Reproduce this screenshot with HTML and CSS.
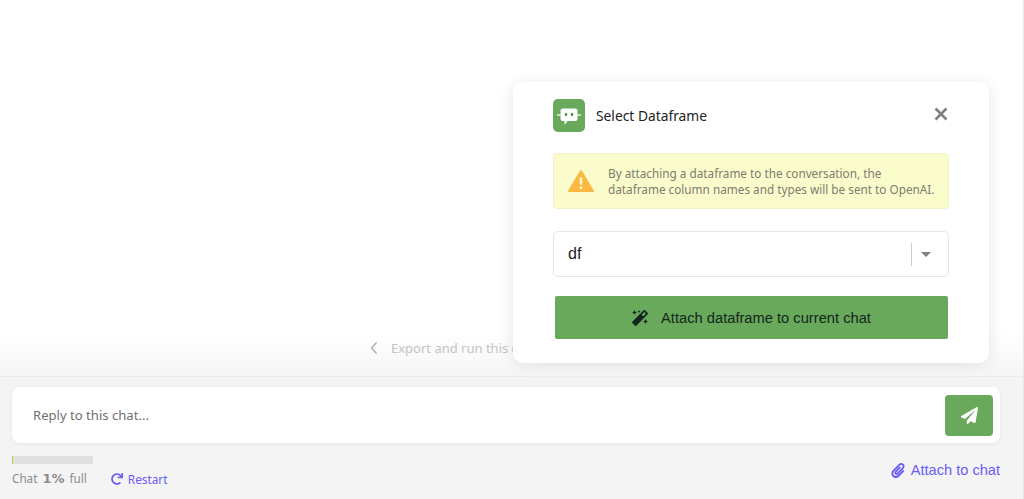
FILE: index.html
```html
<!DOCTYPE html>
<html lang="en">
<head>
<meta charset="utf-8">
<title>Select Dataframe</title>
<link rel="stylesheet" href="styles.css">
</head>
<body>
<div class="app">
  <main class="chat">
    <div class="export"><svg class="chev" viewBox="0 0 10 14" width="10" height="14"><path d="M7.500 1.500 2.500 7l5 5.500" fill="none" stroke="currentColor" stroke-width="1.500"/></svg><span>Export and run this code</span></div>
  </main>
  <footer class="footer">
    <div class="reply">
      <span class="placeholder">Reply to this chat...</span>
      <button class="send"><svg viewBox="0 0 512 512" width="17" height="17"><path fill="#fff" d="M476 3.200L12.500 270.600c-18.100 10.400-15.800 35.600 2.200 43.200L121 358.400l287.300-253.200c5.500-4.900 13.300 2.600 8.600 8.300L176 407v80.500c0 23.600 28.500 32.900 42.500 15.800L282 426l124.600 52.200c14.200 6 30.400-2.900 33-18.200l72-432C515 7.800 493.300-6.800 476 3.200z"/></svg></button>
    </div>
    <div class="meta">
      <div class="usage">
        <div class="track"><div class="fill"></div></div>
        <div class="usage-row">
          <span class="usage-text">Chat <b>1%</b> full</span>
          <a class="link restart"><svg viewBox="0 0 512 512" width="12" height="12"><path fill="currentColor" d="M500.330 0h-47.410a12 12 0 0 0-12 12.570l4 82.760A247.420 247.420 0 0 0 256 8C119.340 8 7.900 119.530 8 256.190 8.100 393.070 119.100 504 256 504a247.100 247.100 0 0 0 166.180-63.910 12 12 0 0 0 .48-17.430l-34-34a12 12 0 0 0-16.380-.55A176 176 0 1 1 402.100 157.800l-101.530-4.870a12 12 0 0 0-12.570 12v47.410a12 12 0 0 0 12 12h200.330a12 12 0 0 0 12-12V12a12 12 0 0 0-12-12z"/></svg>Restart</a>
        </div>
      </div>
      <a class="link attach"><svg viewBox="0 0 448 512" width="14" height="15"><path fill="currentColor" d="M43.246 466.142c-58.430-60.289-57.341-157.511 1.386-217.581L254.392 34c44.316-45.332 116.351-45.336 160.671 0 43.890 44.894 43.943 117.329 0 162.276L232.214 383.128c-29.855 30.537-78.633 30.111-107.982-.998-28.275-29.970-27.368-77.473 1.452-106.953l143.743-146.835c6.182-6.314 16.312-6.422 22.626-.241l22.861 22.379c6.315 6.182 6.422 16.312.241 22.626L171.427 319.927c-4.932 5.045-5.236 13.428-.648 18.292 4.372 4.634 11.245 4.711 15.688.165l182.849-186.851c19.613-20.062 19.613-52.725-.011-72.798-19.189-19.627-49.957-19.637-69.154 0L90.390 293.295c-34.763 35.560-35.299 93.120-1.191 128.313 34.010 35.093 88.985 35.137 123.058.286l172.060-175.999c6.177-6.319 16.307-6.433 22.626-.256l22.877 22.364c6.319 6.177 6.434 16.307.256 22.626l-172.060 175.998c-59.576 60.938-155.943 60.216-214.770-.485z"/></svg>Attach to chat</a>
    </div>
  </footer>
</div>
<section class="modal">
  <header class="modal-head">
    <span class="logo"><svg viewBox="0 0 32 33" width="32" height="33"><path fill="#fff" d="M10 9.500h12a2.500 2.500 0 0 1 2.500 2.500v7.500a2.500 2.500 0 0 1-2.500 2.500h-7.500L11.500 26v-4H10a2.500 2.500 0 0 1-2.500-2.500V12A2.500 2.500 0 0 1 10 9.500z"/><rect x="4" y="15.400" width="3.500" height="1.300" fill="#fff"/><rect x="24.500" y="15.400" width="3.500" height="1.300" fill="#fff"/><rect x="11.800" y="14" width="2.400" height="3" rx="1" fill="#4d8a42"/><rect x="17.800" y="14" width="2.400" height="3" rx="1" fill="#4d8a42"/></svg></span>
    <h2 class="title">Select Dataframe</h2>
    <button class="close"><svg viewBox="0 0 14 14" width="14" height="14"><path d="M1.500 1.500l11 11m0-11-11 11" stroke="#808080" stroke-width="2.600" fill="none"/></svg></button>
  </header>
  <div class="warning">
    <svg class="warn-icon" viewBox="0 0 26 24" width="26" height="24"><path fill="#fbb941" stroke="#fbb941" stroke-width="2" stroke-linejoin="round" d="M13 2 25 22H1z"/><rect x="11.700" y="8" width="2.600" height="8" rx="1.200" fill="#fdf6c8"/><circle cx="13" cy="18.800" r="1.500" fill="#fdf6c8"/></svg>
    <p>By attaching a dataframe to the conversation, the<br>dataframe column names and types will be sent to OpenAI.</p>
  </div>
  <div class="select">
    <span class="value">df</span>
    <span class="divider"></span>
    <span class="caret"></span>
  </div>
  <button class="attach-btn"><svg viewBox="0 0 512 512" width="16" height="16"><path fill="#14261c" d="M224 96l16-32 32-16-32-16-16-32-16 32-32 16 32 16 16 32zM80 160l26.660-53.330L160 80l-53.340-26.670L80 0 53.340 53.330 0 80l53.340 26.670L80 160zm352 128l-26.660 53.330L352 368l53.340 26.670L432 448l26.660-53.330L512 368l-53.340-26.670L432 288zm70.620-193.770L417.770 9.380C411.530 3.120 403.340 0 395.150 0c-8.190 0-16.380 3.120-22.630 9.380L9.380 372.520c-12.500 12.500-12.500 32.760 0 45.250l84.850 84.850c6.250 6.250 14.440 9.370 22.620 9.370 8.190 0 16.380-3.120 22.630-9.370l363.140-363.150c12.500-12.480 12.500-32.750 0-45.240zM359.450 203.460l-50.910-50.910 86.600-86.600 50.910 50.910-86.600 86.600z"/></svg><span>Attach dataframe to current chat</span></button>
</section>
</body>
</html>
```

FILE: styles.css
```css
* { box-sizing: border-box; }
html, body { margin: 0; height: 100%; }
body { width: 1024px; height: 499px; overflow: hidden; position: relative; font-family: "Noto Sans", "Open Sans", sans-serif; background: #fff; border-right: 1px solid #e8e8e8; }
.app { display: flex; flex-direction: column; height: 499px; }
.chat { height: 377px; display: flex; align-items: flex-end; padding: 0 0 18px 369px; background: linear-gradient(#fff 88%, #f6f6f6 100%); border-bottom: 1px solid #ebebeb; }
.export { display: flex; align-items: center; gap: 12px; font-size: 13px; color: #c4c4c4; white-space: nowrap; line-height: 20px; }
.chev { color: #b0b0b0; }
.footer { flex: 1; background: #f4f4f4; padding: 10px 23px 0 12px; }
.reply { height: 56px; background: #fff; border-radius: 8px; box-shadow: 0 1px 4px rgba(0,0,0,.06); display: flex; align-items: center; justify-content: space-between; padding: 0 7px 0 21px; }
.placeholder { font-size: 13.100px; color: #707070; }
.send { width: 48px; height: 41px; border: 0; border-radius: 4px; background: #68a95b; display: flex; align-items: center; justify-content: center; padding: 0; }
.meta { display: flex; justify-content: space-between; align-items: flex-start; margin-top: 13px; }
.track { width: 81px; height: 8px; background: #e0e0e0; }
.fill { width: 1px; height: 8px; background: #bcd03c; }
.usage-row { display: flex; align-items: center; gap: 24px; margin-top: 5px; font-size: 11.700px; line-height: 18px; }
.usage-text { color: #8c8c8c; word-spacing: 2px; }
.usage-text b { font-family: "DejaVu Sans", sans-serif; font-weight: 700; font-size: 13px; }
.link { color: #6b5cf6; display: inline-flex; align-items: center; }
.restart { gap: 5px; font-size: 11.800px; }
.attach { gap: 6px; font-size: 14.600px; font-family: "Liberation Sans", sans-serif; line-height: 20px; margin-top: 4px; }
.modal { position: absolute; left: 513px; top: 82px; width: 476px; height: 281px; background: #fff; border-radius: 10px; box-shadow: 0 2px 16px rgba(0,0,0,.1); padding: 17px 40px 0; display: flex; flex-direction: column; }
.modal-head { display: flex; align-items: center; height: 33px; }
.logo { width: 32px; height: 33px; border-radius: 5px; background: #68a95b; display: flex; align-items: center; justify-content: center; }
.title { margin: 0 0 0 11px; font-size: 13.800px; font-weight: 400; color: #222; flex: 1; }
.close { border: 0; background: none; padding: 0; margin: 0 1px 4px 0; display: flex; }
.warning { margin-top: 21px; height: 56px; background: #fbfccc; border: 1px solid #f1f3c4; border-radius: 4px; display: flex; align-items: center; padding: 0 14px; gap: 14px; }
.warn-icon { flex: none; }
.warning p { margin: 0; font-size: 11.750px; line-height: 16.500px; color: #7d7d70; white-space: nowrap; }
.select { margin-top: 22px; height: 46px; border: 1px solid #e6e6e6; border-radius: 5px; display: flex; align-items: center; padding: 0 17px 0 14px; }
.value { flex: 1; font-family: "Liberation Sans", sans-serif; font-size: 16px; color: #222; }
.divider { width: 1px; height: 23px; background: #ccc; margin-right: 9px; }
.caret { width: 0; height: 0; border-left: 5.500px solid transparent; border-right: 5.500px solid transparent; border-top: 5px solid #808080; }
.attach-btn { margin: 19px 1px 0 2px; height: 43px; border: 0; border-radius: 2px; background: #68a95b; display: flex; align-items: center; justify-content: center; gap: 13px; font-family: "Liberation Sans", sans-serif; font-size: 14.700px; color: #14261c; padding: 0; }
```
